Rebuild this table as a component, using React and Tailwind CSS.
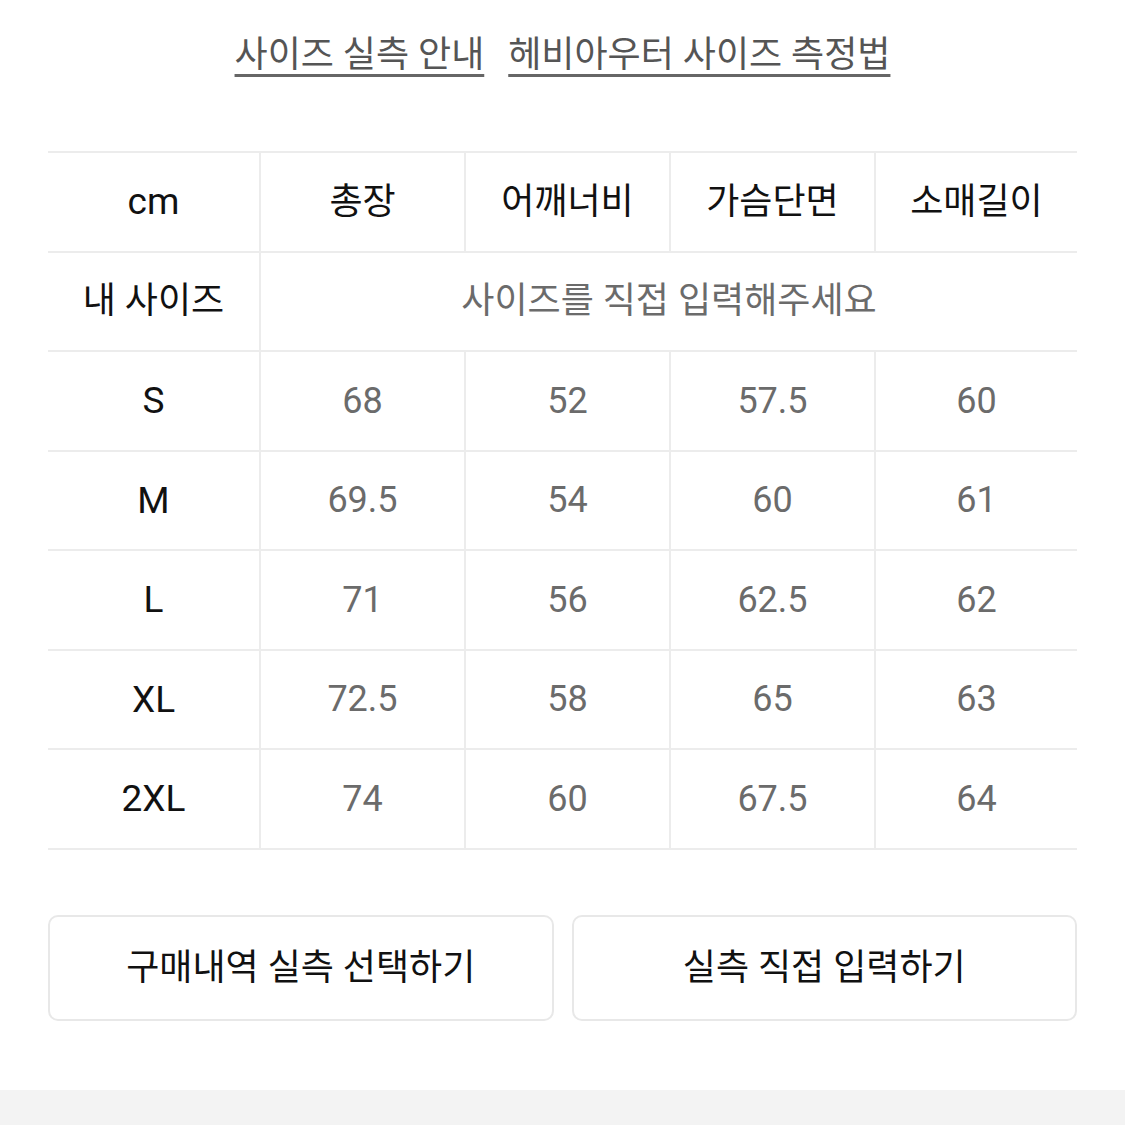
import React from "react";

const rows = [
  ["S", "68", "52", "57.5", "60"],
  ["M", "69.5", "54", "60", "61"],
  ["L", "71", "56", "62.5", "62"],
  ["XL", "72.5", "58", "65", "63"],
  ["2XL", "74", "60", "67.5", "64"],
];

const headers = ["총장", "어깨너비", "가슴단면", "소매길이"];

export default function App() {
  return (
    <div
      className="w-[1125px] min-h-[1125px] bg-white flex flex-col"
      style={{ fontFamily: '"Roboto", "Noto Sans CJK KR", sans-serif' }}
    >
      <div className="flex justify-center gap-[24px] pt-[31px] h-[151px]">
        <a className="text-[36px] leading-[48px] h-[52px] text-[#555] underline decoration-[3px] underline-offset-[7px] decoration-[#666]">
          사이즈 실측 안내
        </a>
        <a className="text-[36px] leading-[48px] h-[52px] text-[#555] underline decoration-[3px] underline-offset-[7px] decoration-[#666]">
          헤비아우터 사이즈 측정법
        </a>
      </div>

      <div className="mx-[48px] grid grid-cols-[211px_205px_205px_205px_1fr] border-b-2 border-[#ececec]">
        <div className="h-[99.5px] border-t-2 border-[#ececec] flex items-center justify-center text-[37px] text-[#111]">
          cm
        </div>
        {headers.map((h) => (
          <div
            key={h}
            className="h-[99.5px] border-t-2 border-l-2 border-[#ececec] flex items-center justify-center text-[36px] text-[#111]"
          >
            {h}
          </div>
        ))}

        <div className="h-[99.5px] border-t-2 border-[#ececec] flex items-center justify-center text-[36px] text-[#111]">
          내 사이즈
        </div>
        <div className="col-span-4 h-[99.5px] border-t-2 border-l-2 border-[#ececec] flex items-center justify-center text-[36px] text-[#6b6b6b]">
          사이즈를 직접 입력해주세요
        </div>

        {rows.map((r) =>
          r.map((v, i) => (
            <div
              key={r[0] + i}
              className={
                i === 0
                  ? "h-[99.5px] border-t-2 border-[#ececec] flex items-center justify-center text-[37px] text-[#111]"
                  : "h-[99.5px] border-t-2 border-l-2 border-[#ececec] flex items-center justify-center text-[36px] text-[#6b6b6b]"
              }
            >
              {v}
            </div>
          ))
        )}
      </div>

      <div className="mx-[48px] mt-[65px] grid grid-cols-2 gap-[18px]">
        <button className="h-[106px] rounded-[10px] border-2 border-[#e8e8e8] bg-white text-[36px] text-[#111]">
          구매내역 실측 선택하기
        </button>
        <button className="h-[106px] rounded-[10px] border-2 border-[#e8e8e8] bg-white text-[36px] text-[#111]">
          실측 직접 입력하기
        </button>
      </div>

      <div className="mt-[69px] flex-1 bg-[#f3f3f3]"></div>
    </div>
  );
}
